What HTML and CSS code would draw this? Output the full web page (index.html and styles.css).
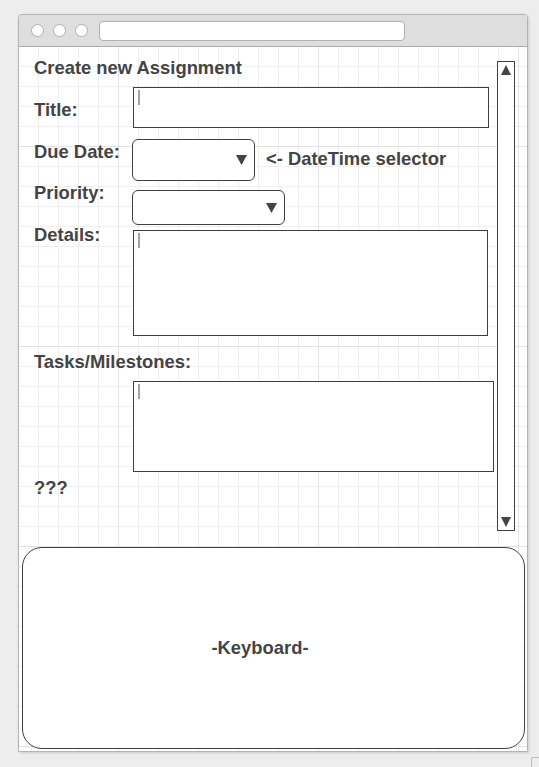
FILE: index.html
```html
<!DOCTYPE html>
<html lang="en">
<head>
<meta charset="utf-8">
<title>Create new Assignment</title>
<link rel="stylesheet" href="styles.css">
</head>
<body>
<div class="window">
  <div class="titlebar">
    <span class="dot"></span>
    <span class="dot"></span>
    <span class="dot"></span>
    <span class="address"></span>
  </div>
  <div class="canvas">
    <div class="top">
      <div class="form">
        <h1 class="heading">Create new Assignment</h1>
        <div class="row row-title">
          <div class="label label-title">Title:</div>
          <div class="field field-title"><span class="caret"></span></div>
        </div>
        <div class="row row-due">
          <div class="label label-due">Due Date:</div>
          <div class="select select-due">
            <svg class="arrow" width="11" height="10" viewBox="0 0 11 10"><polygon points="0,0 11,0 5.5,10"/></svg>
          </div>
          <div class="note">&lt;- DateTime selector</div>
        </div>
        <div class="row row-priority">
          <div class="label">Priority:</div>
          <div class="select select-priority">
            <svg class="arrow" width="11" height="10" viewBox="0 0 11 10"><polygon points="0,0 11,0 5.5,10"/></svg>
          </div>
        </div>
        <div class="row row-details">
          <div class="label">Details:</div>
          <div class="field field-details"><span class="caret"></span></div>
        </div>
        <div class="label label-wide">Tasks/Milestones:</div>
        <div class="field field-tasks"><span class="caret"></span></div>
        <div class="label label-q">???</div>
      </div>
      <div class="scrollbar">
        <svg class="sarrow" width="10" height="10" viewBox="0 0 10 10"><polygon points="5,0 10,10 0,10"/></svg>
        <svg class="sarrow" width="10" height="10" viewBox="0 0 10 10"><polygon points="0,0 10,0 5,10"/></svg>
      </div>
    </div>
    <div class="keyboard"><span class="kb-text">-Keyboard-</span></div>
  </div>
</div>
<div class="corner"></div>
</body>
</html>
```

FILE: styles.css
```css
html, body {
  margin: 0;
  padding: 0;
}

body {
  background: #ededed;
  font-family: "Liberation Sans", Arial, sans-serif;
  color: #444;
  width: 539px;
  height: 767px;
  overflow: hidden;
  position: relative;
}

.window {
  margin: 14px 0 0 18px;
  width: 510px;
  height: 738px;
  box-sizing: border-box;
  border: 1px solid #b3b3b3;
  border-radius: 4px 4px 0 0;
  background: #fff;
  box-shadow: 1px 1px 3px rgba(0, 0, 0, 0.14);
  display: flex;
  flex-direction: column;
  overflow: hidden;
}

.titlebar {
  height: 31px;
  flex: none;
  border-bottom: 1px solid #aaaaaa;
  background: #dedede;
  display: flex;
  align-items: center;
  padding-left: 12px;
  gap: 9px;
}

.dot {
  width: 13px;
  height: 13px;
  box-sizing: border-box;
  border: 1px solid #b0b0b0;
  border-radius: 50%;
  background: #fff;
}

.address {
  margin-left: 2px;
  width: 306px;
  height: 20px;
  box-sizing: border-box;
  border: 1px solid #b0b0b0;
  border-radius: 4px;
  background: #fff;
}

.canvas {
  flex: 1;
  background-color: #fff;
  background-image:
    linear-gradient(to right, #e2e2e2 1px, transparent 1px),
    linear-gradient(to bottom, #e2e2e2 1px, transparent 1px),
    linear-gradient(to right, #efefef 1px, transparent 1px),
    linear-gradient(to bottom, #efefef 1px, transparent 1px);
  background-size: 200px 200px, 200px 200px, 20px 20px, 20px 20px;
  background-position: 99px 99px, 99px 99px, 19px 19px, 19px 19px;
}

.top {
  height: 500px;
  display: flex;
  padding-left: 15px;
  box-sizing: border-box;
}

.form {
  flex: 1;
  padding-top: 11px;
}

.heading {
  margin: 0;
  font-size: 18.4px;
  line-height: 20px;
  font-weight: bold;
}

.row {
  display: flex;
  align-items: flex-start;
}

.label {
  width: 99px;
  flex: none;
  font-size: 18.4px;
  line-height: 20px;
  font-weight: bold;
  white-space: nowrap;
}

.row-title { margin-top: 9px; }
.label-title { margin-top: 13px; }

.row-due { margin-top: 11px; }
.label-due { margin-top: 3px; }

.row-priority { margin-top: 2px; }

.field {
  box-sizing: border-box;
  border: 1px solid #3f3f3f;
  background: #fff;
  padding: 2px 0 0 4px;
  flex: none;
}

.caret {
  display: block;
  width: 2px;
  height: 15px;
  background: #a3a3a3;
}

.field-title {
  width: 356px;
  height: 41px;
}

.field-details {
  margin-top: 5px;
  width: 355px;
  height: 106px;
}

.field-tasks {
  margin: 9px 0 0 99px;
  width: 361px;
  height: 91px;
}

.select {
  box-sizing: border-box;
  border: 1px solid #3f3f3f;
  border-radius: 6px;
  background: #fff;
  display: flex;
  align-items: center;
  justify-content: flex-end;
  padding-right: 7px;
  margin-left: -1px;
  flex: none;
}

.select-due {
  width: 123px;
  height: 42px;
}

.select-priority {
  margin-top: 7px;
  width: 153px;
  height: 35px;
}

.arrow {
  display: block;
  fill: #444;
}

.note {
  margin: 10px 0 0 11px;
  font-size: 18.4px;
  line-height: 20px;
  font-weight: bold;
  white-space: nowrap;
}

.label-wide {
  width: auto;
  margin-top: 16px;
}

.label-q {
  margin-top: 6px;
}

.scrollbar {
  flex: none;
  margin: 14px 12px 0 0;
  width: 18px;
  height: 470px;
  box-sizing: border-box;
  border: 1px solid #3f3f3f;
  background: #fff;
  display: flex;
  flex-direction: column;
  align-items: center;
  justify-content: space-between;
  padding: 3px 0 3px;
}

.sarrow {
  display: block;
  fill: #444;
}

.keyboard {
  margin-left: 3px;
  width: 503px;
  height: 202px;
  box-sizing: border-box;
  border: 1px solid #3f3f3f;
  border-radius: 20px;
  background: #fff;
  display: flex;
  align-items: center;
  justify-content: center;
  padding-right: 27px;
}

.kb-text {
  font-size: 18.4px;
  line-height: 20px;
  font-weight: bold;
}

.corner {
  position: absolute;
  left: 531px;
  top: 757px;
  width: 14px;
  height: 14px;
  box-sizing: border-box;
  border: 1px solid #bdbdbd;
  border-radius: 2px;
}
```
